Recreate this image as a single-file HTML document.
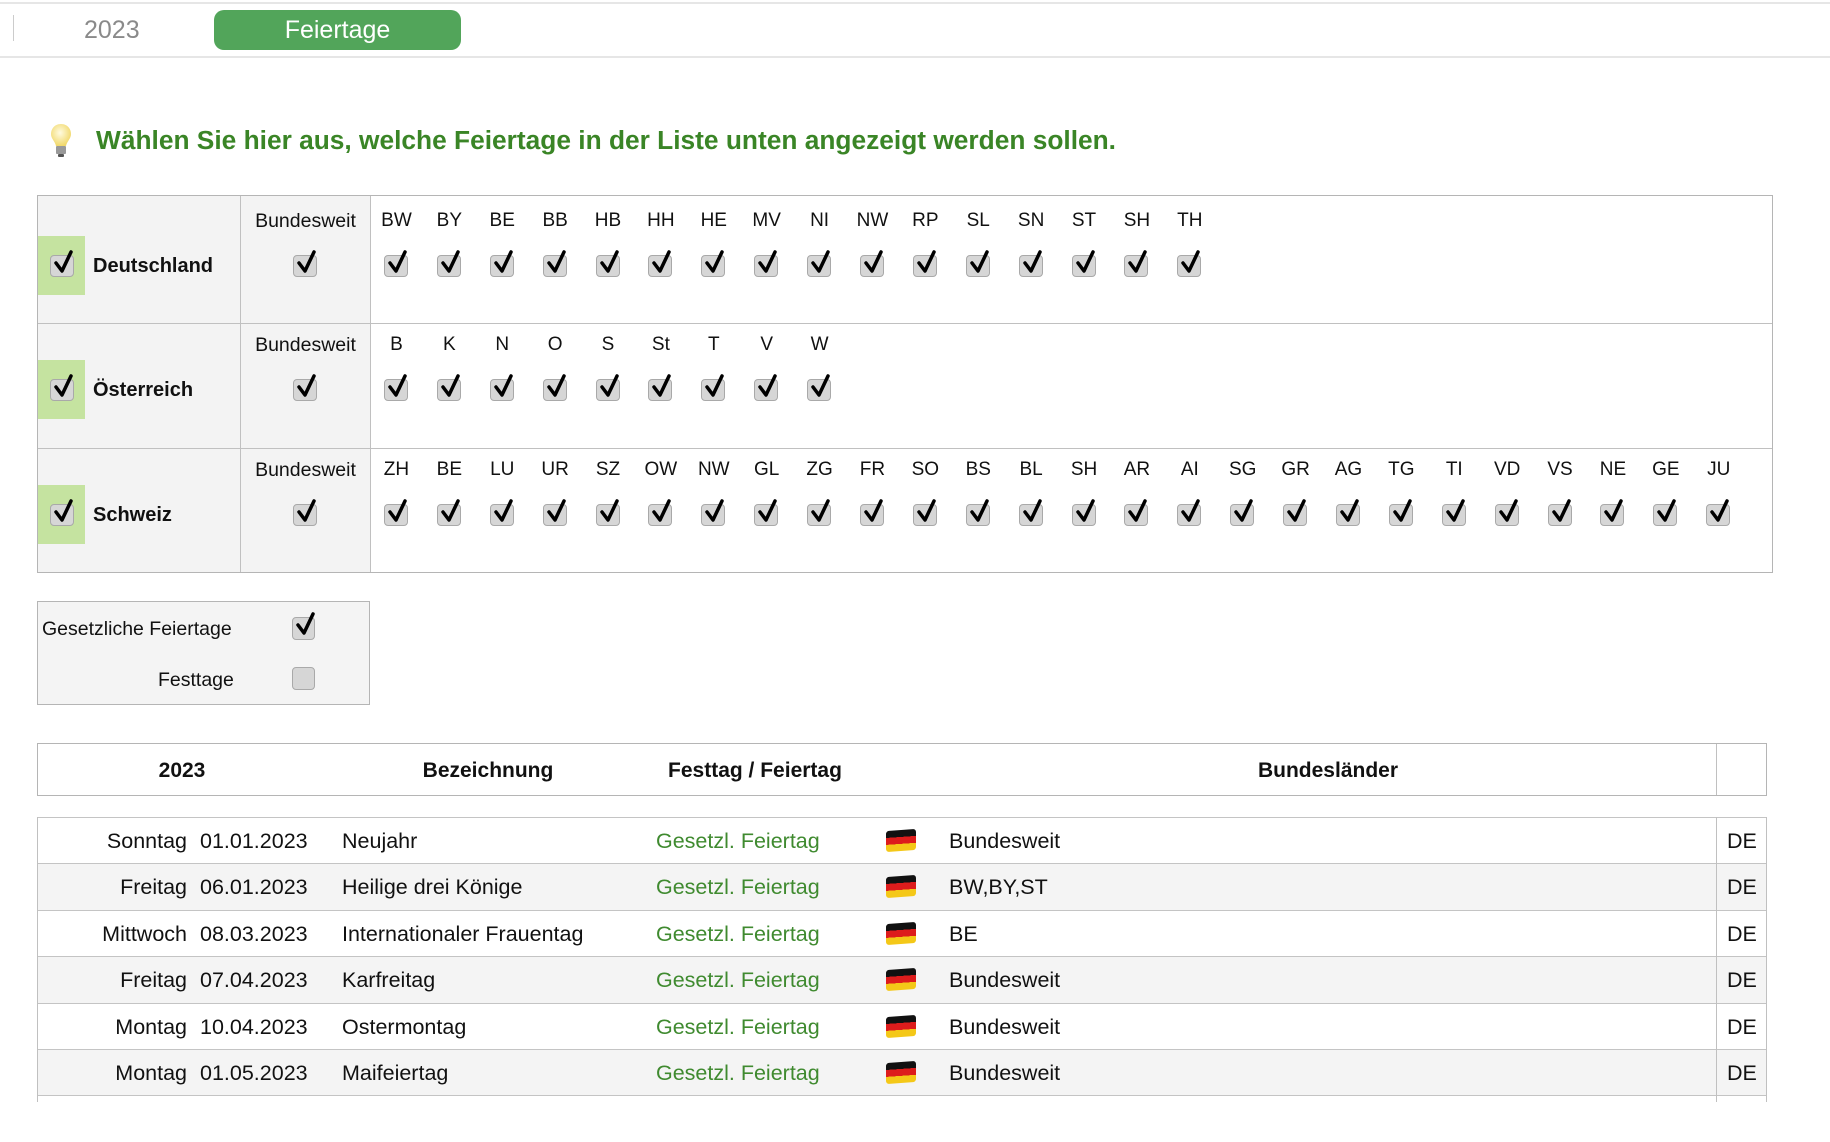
<!DOCTYPE html>
<html><head><meta charset="utf-8">
<style>
*{margin:0;padding:0;box-sizing:border-box}
body{width:1830px;height:1102px;overflow:hidden;background:#fff;font-family:"Liberation Sans",Arial,sans-serif;color:#111;position:relative}
.a{position:absolute}
.cb{position:absolute;width:24px;height:22px;background:#d6d6d6;border:1px solid #a9a9a9;border-radius:4px}
.cb svg{position:absolute;left:1px;top:-8px;overflow:visible}
.row{position:absolute;left:370px;display:flex}
.row div{width:52.9px;text-align:center;font-size:19px;position:relative;height:70px}
.row div .cb{left:14px;top:45px}
.dr{position:absolute;left:37px;width:1729px;height:47px;border-top:1px solid #c4c4c4;font-size:21.5px}
.dr span{position:absolute;top:11px;white-space:nowrap}
.g{color:#3f8a2f}
.flag{position:absolute;left:849px;top:12px;width:30px;height:21px;border-radius:3px;background:linear-gradient(#111 0 33%,#dd1c1c 33% 66%,#f4c818 66%);transform:skewY(-4deg)}
</style></head><body>
<div class="a" style="left:0;top:2px;width:1830px;height:2px;background:#e6e6e6"></div>
<div class="a" style="left:13px;top:15px;width:1px;height:26px;background:#ccc"></div>
<div class="a" style="left:84px;top:16px;font-size:25px;color:#8a8a8a">2023</div>
<div class="a" style="left:214px;top:10px;width:247px;height:40px;background:#52a55a;border-radius:10px;color:#fff;font-size:25px;text-align:center;line-height:40px">Feiertage</div>
<div class="a" style="left:0;top:56px;width:1830px;height:2px;background:#e6e6e6"></div>

<svg class="a" style="left:50px;top:123px" width="22" height="36" viewBox="0 0 22 36"><defs><radialGradient id="bg" cx="0.45" cy="0.4" r="0.6"><stop offset="0" stop-color="#fffbe0"/><stop offset="1" stop-color="#f1d86a"/></radialGradient></defs><path d="M11 1C5 1 1 5.5 1 11c0 5 4 7 5 12h10c1-5 5-7 5-12C21 5.5 17 1 11 1z" fill="url(#bg)"/><rect x="6" y="23" width="10" height="8" rx="1" fill="#999"/><rect x="8" y="31" width="6" height="3" rx="1" fill="#555"/></svg>
<div class="a" style="left:96px;top:125px;font-size:26.3px;font-weight:bold;color:#3a8526">Wählen Sie hier aus, welche Feiertage in der Liste unten angezeigt werden sollen.</div>

<div class="a" style="left:37px;top:195px;width:1736px;height:378px;border:1px solid #b5b5b5"></div>
<div class="a" style="left:38px;top:196px;width:332px;height:376px;background:#f3f3f3"></div>
<div class="a" style="left:240px;top:196px;width:1px;height:376px;background:#c0c0c0"></div>
<div class="a" style="left:370px;top:196px;width:1px;height:376px;background:#c0c0c0"></div>
<div class="a" style="left:38px;top:323px;width:1734px;height:1px;background:#c0c0c0"></div>
<div class="a" style="left:38px;top:448px;width:1734px;height:1px;background:#c0c0c0"></div>

<svg width="0" height="0" style="position:absolute"><defs><path id="ck" d="M4 15 L10 23 L19 4" fill="none" stroke="#000" stroke-width="3.5" stroke-linecap="round" stroke-linejoin="round"/></defs></svg>

<div class="a" style="left:38px;top:236px;width:47px;height:59px;background:#c5e3a0"></div>
<div class="cb" style="left:50px;top:255px"><svg width="24" height="28"><use href="#ck"/></svg></div>
<div class="a" style="left:93px;top:255px;font-size:20px;font-weight:bold">Deutschland</div>
<div class="a" style="left:38px;top:360px;width:47px;height:59px;background:#c5e3a0"></div>
<div class="cb" style="left:50px;top:379px"><svg width="24" height="28"><use href="#ck"/></svg></div>
<div class="a" style="left:93px;top:379px;font-size:20px;font-weight:bold">Österreich</div>
<div class="a" style="left:38px;top:485px;width:47px;height:59px;background:#c5e3a0"></div>
<div class="cb" style="left:50px;top:504px"><svg width="24" height="28"><use href="#ck"/></svg></div>
<div class="a" style="left:93px;top:504px;font-size:20px;font-weight:bold">Schweiz</div>

<div class="a" style="left:241px;top:210px;width:129px;text-align:center;font-size:19.5px">Bundesweit</div>
<div class="cb" style="left:293px;top:255px"><svg width="24" height="28"><use href="#ck"/></svg></div>
<div class="a" style="left:241px;top:334px;width:129px;text-align:center;font-size:19.5px">Bundesweit</div>
<div class="cb" style="left:293px;top:379px"><svg width="24" height="28"><use href="#ck"/></svg></div>
<div class="a" style="left:241px;top:459px;width:129px;text-align:center;font-size:19.5px">Bundesweit</div>
<div class="cb" style="left:293px;top:504px"><svg width="24" height="28"><use href="#ck"/></svg></div>

<div class="row" style="top:210px">
<div>BW<i class="cb"><svg width="24" height="28"><use href="#ck"/></svg></i></div>
<div>BY<i class="cb"><svg width="24" height="28"><use href="#ck"/></svg></i></div>
<div>BE<i class="cb"><svg width="24" height="28"><use href="#ck"/></svg></i></div>
<div>BB<i class="cb"><svg width="24" height="28"><use href="#ck"/></svg></i></div>
<div>HB<i class="cb"><svg width="24" height="28"><use href="#ck"/></svg></i></div>
<div>HH<i class="cb"><svg width="24" height="28"><use href="#ck"/></svg></i></div>
<div>HE<i class="cb"><svg width="24" height="28"><use href="#ck"/></svg></i></div>
<div>MV<i class="cb"><svg width="24" height="28"><use href="#ck"/></svg></i></div>
<div>NI<i class="cb"><svg width="24" height="28"><use href="#ck"/></svg></i></div>
<div>NW<i class="cb"><svg width="24" height="28"><use href="#ck"/></svg></i></div>
<div>RP<i class="cb"><svg width="24" height="28"><use href="#ck"/></svg></i></div>
<div>SL<i class="cb"><svg width="24" height="28"><use href="#ck"/></svg></i></div>
<div>SN<i class="cb"><svg width="24" height="28"><use href="#ck"/></svg></i></div>
<div>ST<i class="cb"><svg width="24" height="28"><use href="#ck"/></svg></i></div>
<div>SH<i class="cb"><svg width="24" height="28"><use href="#ck"/></svg></i></div>
<div>TH<i class="cb"><svg width="24" height="28"><use href="#ck"/></svg></i></div>
</div>

<div class="row" style="top:334px">
<div>B<i class="cb"><svg width="24" height="28"><use href="#ck"/></svg></i></div>
<div>K<i class="cb"><svg width="24" height="28"><use href="#ck"/></svg></i></div>
<div>N<i class="cb"><svg width="24" height="28"><use href="#ck"/></svg></i></div>
<div>O<i class="cb"><svg width="24" height="28"><use href="#ck"/></svg></i></div>
<div>S<i class="cb"><svg width="24" height="28"><use href="#ck"/></svg></i></div>
<div>St<i class="cb"><svg width="24" height="28"><use href="#ck"/></svg></i></div>
<div>T<i class="cb"><svg width="24" height="28"><use href="#ck"/></svg></i></div>
<div>V<i class="cb"><svg width="24" height="28"><use href="#ck"/></svg></i></div>
<div>W<i class="cb"><svg width="24" height="28"><use href="#ck"/></svg></i></div>
</div>

<div class="row" style="top:459px">
<div>ZH<i class="cb"><svg width="24" height="28"><use href="#ck"/></svg></i></div>
<div>BE<i class="cb"><svg width="24" height="28"><use href="#ck"/></svg></i></div>
<div>LU<i class="cb"><svg width="24" height="28"><use href="#ck"/></svg></i></div>
<div>UR<i class="cb"><svg width="24" height="28"><use href="#ck"/></svg></i></div>
<div>SZ<i class="cb"><svg width="24" height="28"><use href="#ck"/></svg></i></div>
<div>OW<i class="cb"><svg width="24" height="28"><use href="#ck"/></svg></i></div>
<div>NW<i class="cb"><svg width="24" height="28"><use href="#ck"/></svg></i></div>
<div>GL<i class="cb"><svg width="24" height="28"><use href="#ck"/></svg></i></div>
<div>ZG<i class="cb"><svg width="24" height="28"><use href="#ck"/></svg></i></div>
<div>FR<i class="cb"><svg width="24" height="28"><use href="#ck"/></svg></i></div>
<div>SO<i class="cb"><svg width="24" height="28"><use href="#ck"/></svg></i></div>
<div>BS<i class="cb"><svg width="24" height="28"><use href="#ck"/></svg></i></div>
<div>BL<i class="cb"><svg width="24" height="28"><use href="#ck"/></svg></i></div>
<div>SH<i class="cb"><svg width="24" height="28"><use href="#ck"/></svg></i></div>
<div>AR<i class="cb"><svg width="24" height="28"><use href="#ck"/></svg></i></div>
<div>AI<i class="cb"><svg width="24" height="28"><use href="#ck"/></svg></i></div>
<div>SG<i class="cb"><svg width="24" height="28"><use href="#ck"/></svg></i></div>
<div>GR<i class="cb"><svg width="24" height="28"><use href="#ck"/></svg></i></div>
<div>AG<i class="cb"><svg width="24" height="28"><use href="#ck"/></svg></i></div>
<div>TG<i class="cb"><svg width="24" height="28"><use href="#ck"/></svg></i></div>
<div>TI<i class="cb"><svg width="24" height="28"><use href="#ck"/></svg></i></div>
<div>VD<i class="cb"><svg width="24" height="28"><use href="#ck"/></svg></i></div>
<div>VS<i class="cb"><svg width="24" height="28"><use href="#ck"/></svg></i></div>
<div>NE<i class="cb"><svg width="24" height="28"><use href="#ck"/></svg></i></div>
<div>GE<i class="cb"><svg width="24" height="28"><use href="#ck"/></svg></i></div>
<div>JU<i class="cb"><svg width="24" height="28"><use href="#ck"/></svg></i></div>
</div>

<div class="a" style="left:37px;top:601px;width:333px;height:104px;border:1px solid #b5b5b5;background:#f4f4f4"></div>
<div class="a" style="left:42px;top:618px;font-size:19.5px">Gesetzliche Feiertage</div>
<div class="cb" style="left:292px;top:617px;width:23px;height:23px"><svg width="24" height="28"><use href="#ck"/></svg></div>
<div class="a" style="left:158px;top:669px;font-size:19.5px">Festtage</div>
<div class="cb" style="left:292px;top:667px;width:23px;height:23px"></div>

<div class="a" style="left:37px;top:743px;width:1730px;height:53px;border:1px solid #b5b5b5"></div>
<div class="a" style="left:1716px;top:744px;width:1px;height:51px;background:#c0c0c0"></div>
<div class="a" style="left:100px;top:759px;width:164px;text-align:center;font-size:21px;font-weight:bold">2023</div>
<div class="a" style="left:388px;top:759px;width:200px;text-align:center;font-size:21px;font-weight:bold">Bezeichnung</div>
<div class="a" style="left:635px;top:759px;width:240px;text-align:center;font-size:21px;font-weight:bold">Festtag / Feiertag</div>
<div class="a" style="left:1178px;top:759px;width:300px;text-align:center;font-size:21px;font-weight:bold">Bundesländer</div>

<div class="dr" style="top:817px;background:#fff"><span style="right:1579px">Sonntag</span><span style="left:163px">01.01.2023</span><span style="left:305px">Neujahr</span><span class="g" style="left:619px">Gesetzl. Feiertag</span><i class="flag"></i><span style="left:912px">Bundesweit</span><span style="left:1690px">DE</span></div>
<div class="dr" style="top:863px;background:#f4f4f4"><span style="right:1579px">Freitag</span><span style="left:163px">06.01.2023</span><span style="left:305px">Heilige drei Könige</span><span class="g" style="left:619px">Gesetzl. Feiertag</span><i class="flag"></i><span style="left:912px">BW,BY,ST</span><span style="left:1690px">DE</span></div>
<div class="dr" style="top:910px;background:#fff"><span style="right:1579px">Mittwoch</span><span style="left:163px">08.03.2023</span><span style="left:305px">Internationaler Frauentag</span><span class="g" style="left:619px">Gesetzl. Feiertag</span><i class="flag"></i><span style="left:912px">BE</span><span style="left:1690px">DE</span></div>
<div class="dr" style="top:956px;background:#f4f4f4"><span style="right:1579px">Freitag</span><span style="left:163px">07.04.2023</span><span style="left:305px">Karfreitag</span><span class="g" style="left:619px">Gesetzl. Feiertag</span><i class="flag"></i><span style="left:912px">Bundesweit</span><span style="left:1690px">DE</span></div>
<div class="dr" style="top:1003px;background:#fff"><span style="right:1579px">Montag</span><span style="left:163px">10.04.2023</span><span style="left:305px">Ostermontag</span><span class="g" style="left:619px">Gesetzl. Feiertag</span><i class="flag"></i><span style="left:912px">Bundesweit</span><span style="left:1690px">DE</span></div>
<div class="dr" style="top:1049px;background:#f4f4f4"><span style="right:1579px">Montag</span><span style="left:163px">01.05.2023</span><span style="left:305px">Maifeiertag</span><span class="g" style="left:619px">Gesetzl. Feiertag</span><i class="flag"></i><span style="left:912px">Bundesweit</span><span style="left:1690px">DE</span></div>
<div class="dr" style="top:1095px;background:#fff"></div>
<div class="a" style="left:37px;top:817px;width:1px;height:285px;background:#c0c0c0"></div>
<div class="a" style="left:1766px;top:817px;width:1px;height:285px;background:#c0c0c0"></div>
<div class="a" style="left:1716px;top:817px;width:1px;height:285px;background:#c0c0c0"></div>
</body></html>
